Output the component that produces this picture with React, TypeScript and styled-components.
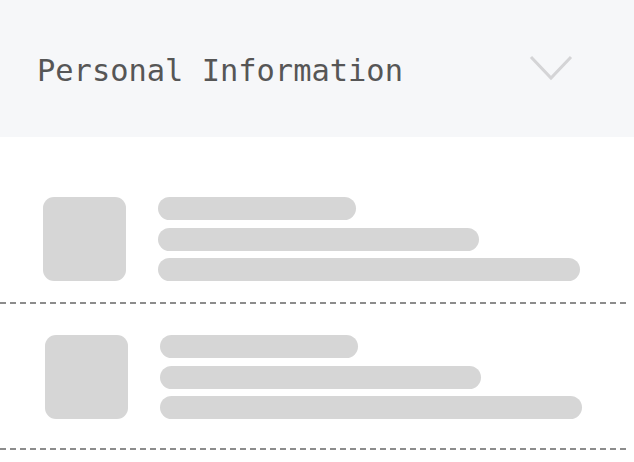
import React from 'react';
import styled, { createGlobalStyle } from 'styled-components';

const GlobalStyle = createGlobalStyle`
  html, body {
    margin: 0;
    padding: 0;
    background: #ffffff;
  }
`;

const rows = [
  { top: 60, bottom: 21, shift: 43 },
  { top: 31, bottom: 29, shift: 45 },
];

const barWidths = [198, 321, 422];

export default function App() {
  return (
    <>
      <GlobalStyle />
      <Panel>
        <Header>
          <Title>Personal Information</Title>
          <Chevron width="44" height="26" viewBox="0 0 44 26">
            <polyline points="2,2 22,23 42,2" fill="none" stroke="#d4d4d6" strokeWidth="3" />
          </Chevron>
        </Header>
        <List>
          {rows.map((row, i) => (
            <React.Fragment key={i}>
              <Row $top={row.top} $bottom={row.bottom} $shift={row.shift}>
                <Thumb />
                <Lines>
                  {barWidths.map((w) => (
                    <Bar key={w} $width={w} />
                  ))}
                </Lines>
              </Row>
              <Divider />
            </React.Fragment>
          ))}
        </List>
      </Panel>
    </>
  );
}

const Panel = styled.div`
  width: 634px;
  height: 462px;
  overflow: hidden;
  background: #ffffff;
`;

const Header = styled.header`
  height: 137px;
  display: flex;
  align-items: center;
  justify-content: space-between;
  padding: 0 61px 0 37px;
  box-sizing: border-box;
  background: #f6f7f9;
`;

const Title = styled.h2`
  margin: 3px 0 0;
  font-family: "DejaVu Sans Mono", "Liberation Mono", monospace;
  font-weight: normal;
  font-size: 30.4px;
  color: #565656;
  letter-spacing: 0;
`;

const Chevron = styled.svg`
  display: block;
  margin-top: -1px;
`;

const List = styled.div`
  display: flex;
  flex-direction: column;
`;

const Row = styled.div<{ $top: number; $bottom: number; $shift: number }>`
  display: flex;
  gap: 32px;
  padding: ${(p) => p.$top}px 0 ${(p) => p.$bottom}px ${(p) => p.$shift}px;
`;

const Thumb = styled.div`
  width: 83px;
  height: 84px;
  border-radius: 11px;
  background: #d6d6d6;
  flex-shrink: 0;
`;

const Lines = styled.div`
  display: flex;
  flex-direction: column;
  gap: 7.5px;
`;

const Bar = styled.div<{ $width: number }>`
  width: ${(p) => p.$width}px;
  height: 23px;
  border-radius: 12px;
  background: #d6d6d6;
`;

const Divider = styled.div`
  height: 2px;
  width: 628px;
  background: repeating-linear-gradient(
    to right,
    #8c8c8c 0,
    #8c8c8c 6px,
    transparent 6px,
    transparent 10px
  );
`;
